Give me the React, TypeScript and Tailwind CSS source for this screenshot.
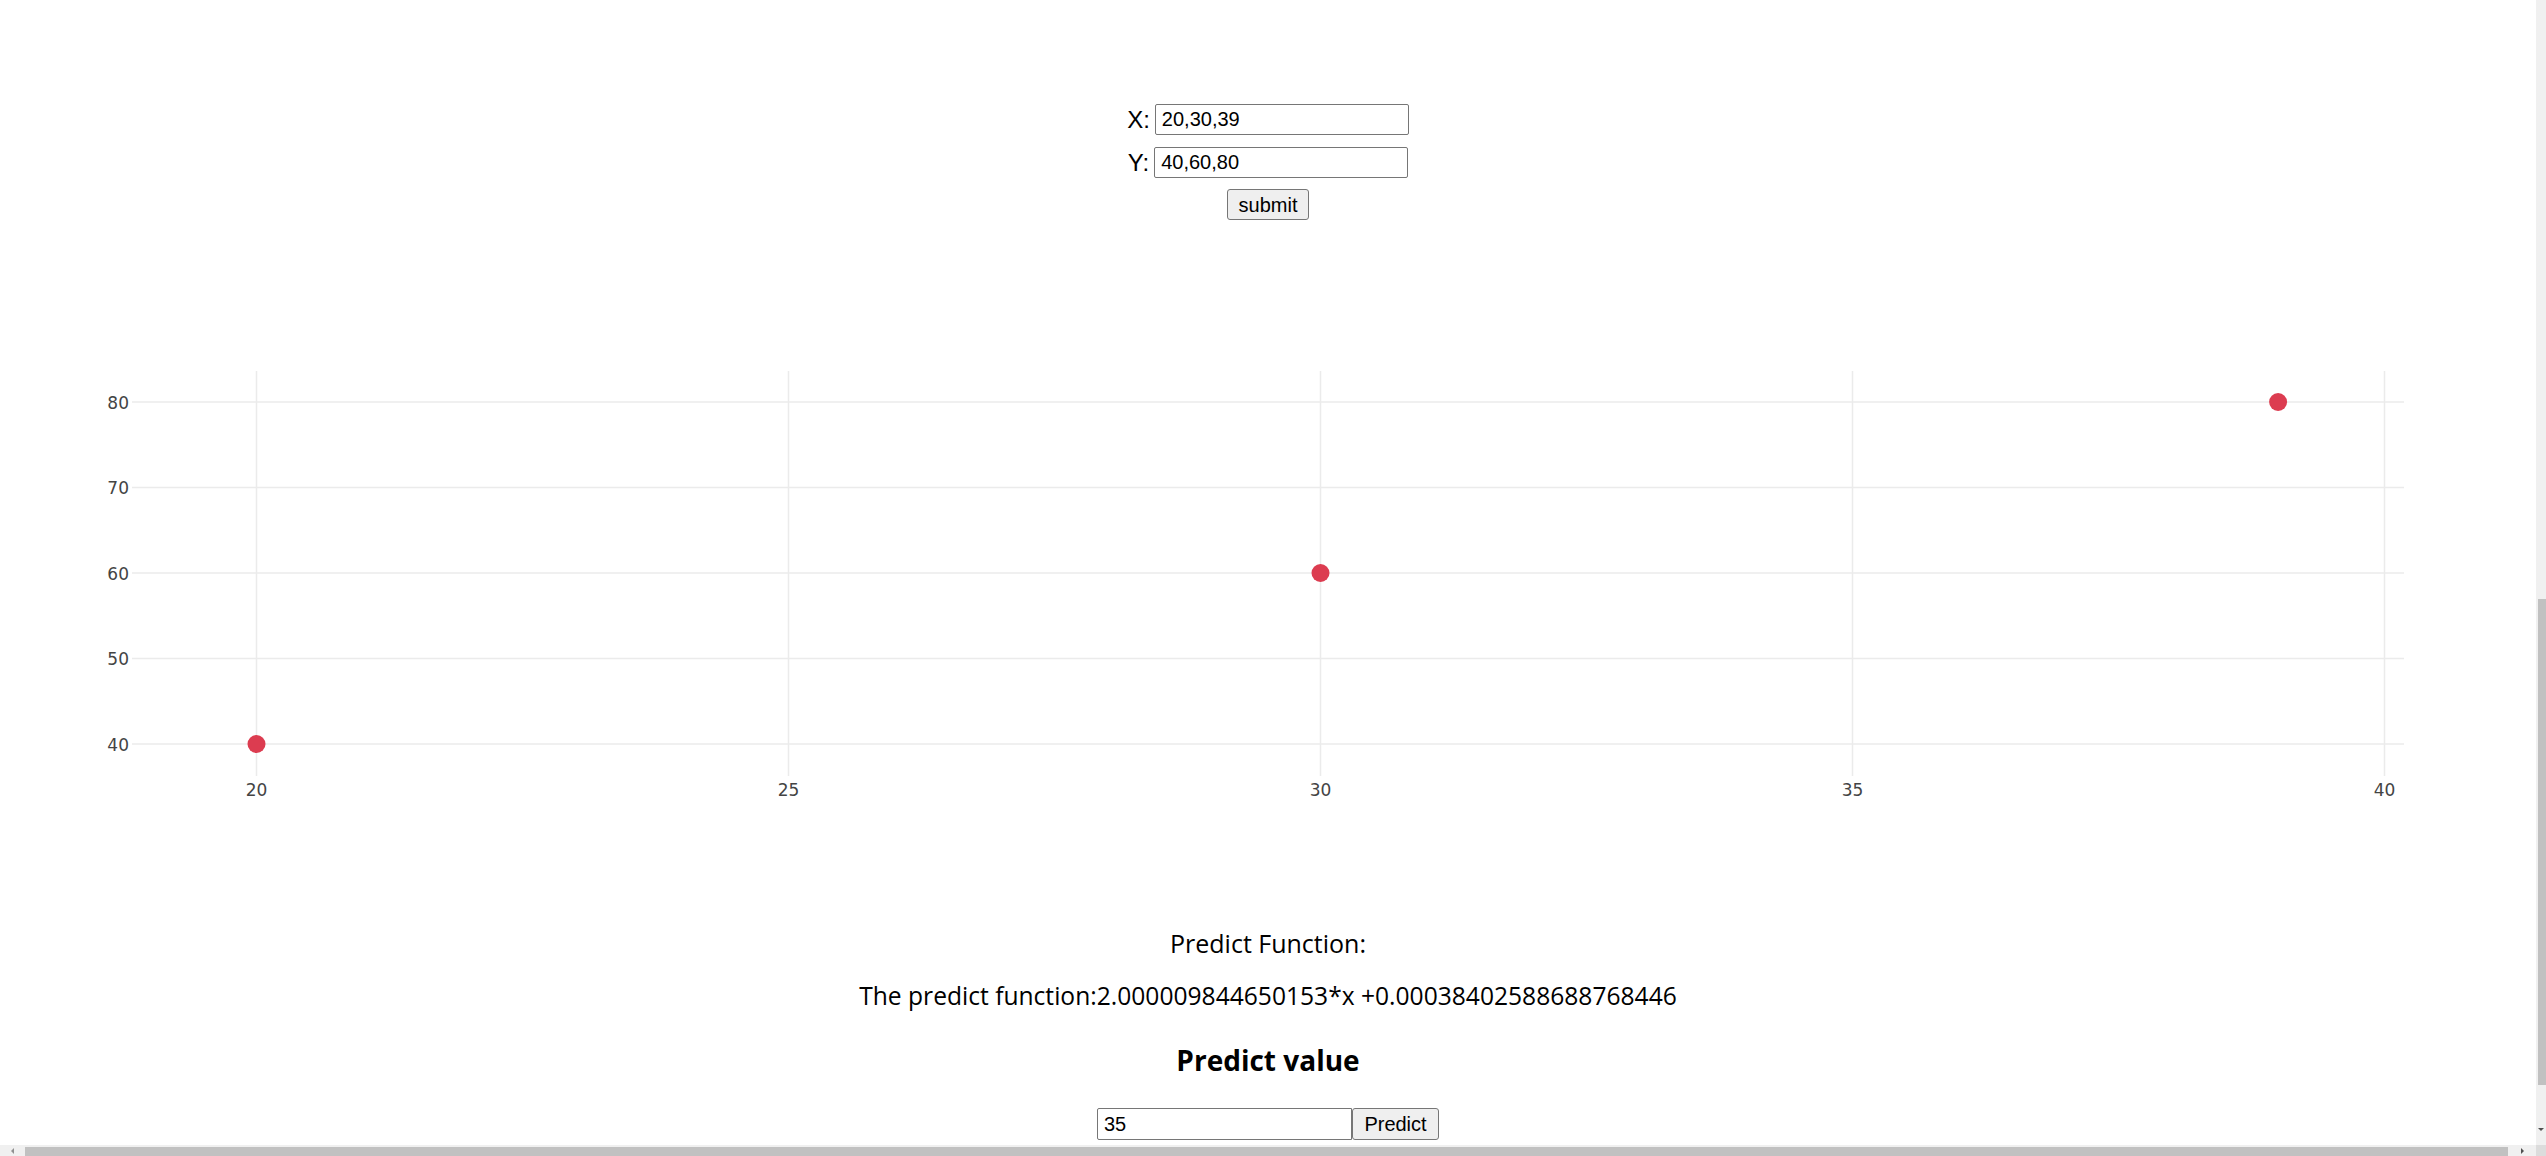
import React from "react";

const xTicks = [20, 25, 30, 35, 40];
const yTicks = [40, 50, 60, 70, 80];
const points: [number, number][] = [
  [20, 40],
  [30, 60],
  [39, 80],
];

// svg starts at page y=340
const px = (v: number) => 256.5 + (v - 20) * 106.4;
const py = (v: number) => 403 - (v - 40) * 8.55;

function Chart() {
  return (
    <svg width={2536} height={580} viewBox="0 0 2536 580" className="block shrink-0">
      {yTicks.map((t) => (
        <line key={"h" + t} x1={132} x2={2404} y1={py(t)} y2={py(t)} stroke="#ebebeb" strokeWidth={1.5} />
      ))}
      {xTicks.map((t) => (
        <line key={"v" + t} x1={px(t)} x2={px(t)} y1={30} y2={435} stroke="#ebebeb" strokeWidth={1.5} />
      ))}
      {yTicks.map((t) => (
        <text
          key={"yl" + t}
          x={129}
          y={py(t) + 6.5}
          textAnchor="end"
          fontSize={17}
          fill="#444"
          fontFamily="'DejaVu Sans', Verdana, Arial, sans-serif"
        >
          {t}
        </text>
      ))}
      {xTicks.map((t) => (
        <text
          key={"xl" + t}
          x={px(t)}
          y={454.5}
          textAnchor="middle"
          fontSize={17}
          fill="#444"
          fontFamily="'DejaVu Sans', Verdana, Arial, sans-serif"
        >
          {t}
        </text>
      ))}
      {points.map(([x, y]) => (
        <circle key={x + "-" + y} cx={px(x)} cy={py(y)} r={9} fill="#dc3c50" />
      ))}
    </svg>
  );
}

export default function App() {
  return (
    <div className="w-[2546px] h-[1156px] flex flex-col overflow-hidden bg-white text-black">
      <div className="flex flex-1 min-h-0">
        {/* main page */}
        <div className="flex-1 min-w-0 flex flex-col items-center overflow-hidden">
          <div className="pt-[104px] flex flex-col items-center font-['Liberation_Sans',Arial,sans-serif]">
            <div className="flex items-center h-[31px] gap-[5px]">
              <span className="text-[24px] leading-none">X:</span>
              <input
                defaultValue="20,30,39"
                className="w-[254px] h-[31px] border border-[#767676] rounded-[2px] pl-[6px] text-[20px] outline-none bg-white"
              />
            </div>
            <div className="flex items-center h-[31px] gap-[5px] mt-[12px]">
              <span className="text-[24px] leading-none">Y:</span>
              <input
                defaultValue="40,60,80"
                className="w-[254px] h-[31px] border border-[#767676] rounded-[2px] pl-[6px] text-[20px] outline-none bg-white"
              />
            </div>
            <button className="mt-[11px] w-[82px] h-[31px] bg-[#efefef] border border-[#767676] rounded-[3px] text-[20px] leading-none flex items-center justify-center">
              submit
            </button>
          </div>
          <div className="mt-[121px]">
            <Chart />
          </div>
          <div className="font-['Open_Sans',sans-serif] flex flex-col items-center">
            <div className="h-[44px] flex items-center text-[25px] leading-none">Predict Function:</div>
            <div className="h-[44px] mt-[9px] flex items-center text-[24.6px] leading-none whitespace-nowrap">
              The predict function:2.000009844650153*x +0.00038402588688768446
            </div>
            <div className="h-[44px] mt-[20px] flex items-center text-[28px] font-bold leading-none">
              Predict value
            </div>
          </div>
          <div className="mt-[26px] flex items-stretch h-[32px] font-['Liberation_Sans',Arial,sans-serif]">
            <input
              defaultValue="35"
              className="w-[255px] h-[32px] border border-[#767676] rounded-l-[2px] pl-[6px] text-[20px] outline-none bg-white"
            />
            <button className="w-[87px] h-[32px] bg-[#efefef] border border-[#767676] rounded-[3px] text-[20px] leading-none flex items-center justify-center">
              Predict
            </button>
          </div>
        </div>
        {/* vertical scrollbar */}
        <div className="w-[10px] shrink-0 bg-[#f0f0f0] flex flex-col items-end">
          <div className="h-[599px]" />
          <div className="w-[8px] h-[486px] bg-[#c1c1c1]" />
          <div className="flex-1 flex items-end justify-center w-full pb-[14px]">
            <div className="w-0 h-0 border-l-[3px] border-r-[3px] border-t-[3px] border-l-transparent border-r-transparent border-t-[#505050]" />
          </div>
        </div>
      </div>
      {/* horizontal scrollbar */}
      <div className="h-[11px] shrink-0 flex bg-[#f0f0f0]">
        <div className="w-[25px] flex items-center justify-center">
          <div className="w-0 h-0 border-t-[3px] border-b-[3px] border-r-[3px] border-t-transparent border-b-transparent border-r-[#909090]" />
        </div>
        <div className="flex-1 flex flex-col justify-end">
          <div className="h-[9px] bg-[#c1c1c1]" />
        </div>
        <div className="w-[28px] flex items-center justify-center">
          <div className="w-0 h-0 border-t-[3px] border-b-[3px] border-l-[3px] border-t-transparent border-b-transparent border-l-[#505050]" />
        </div>
        <div className="w-[10px] bg-[#dcdcdc]" />
      </div>
    </div>
  );
}
